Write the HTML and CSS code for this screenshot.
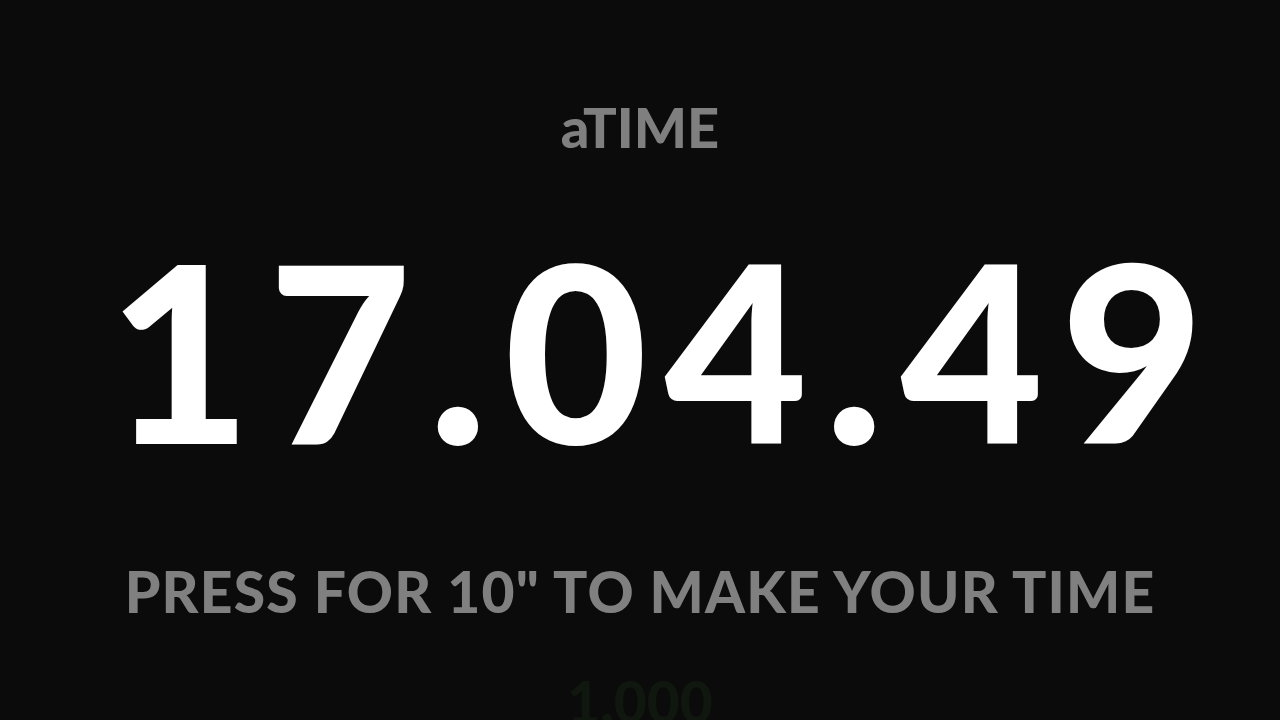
FILE: index.html
```html
<!DOCTYPE html>
<html>
<head>
<meta charset="utf-8">
<link rel="stylesheet" href="styles.css">
</head>
<body>
<main class="screen">
  <div class="title">aTIME</div>
  <div class="clock">17.04.49</div>
  <div class="hint">PRESS FOR 10" TO MAKE YOUR TIME</div>
  <div class="counter">1.000</div>
</main>
</body>
</html>
```
FILE: styles.css
```css
html, body {
  margin: 0;
  padding: 0;
  background: #0b0b0b;
  height: 100%;
  overflow: hidden;
}
.screen {
  display: flex;
  flex-direction: column;
  align-items: center;
  padding-top: 99px;
  font-family: "Lato", "DejaVu Sans", sans-serif;
  font-weight: 900;
}
.title {
  font-size: 56px;
  line-height: 1;
  color: #7f7f7f;
}
.clock {
  margin-top: 70px;
  margin-left: 49px;
  font-size: 247px;
  line-height: 1;
  color: #ffffff;
  letter-spacing: 17px;
}
.hint {
  margin-top: 91px;
  font-size: 57px;
  line-height: 1;
  color: #808080;
  letter-spacing: 1.2px;
}
.counter {
  margin-top: 53px;
  font-size: 57px;
  line-height: 1;
  color: #0f170f;
}
```
